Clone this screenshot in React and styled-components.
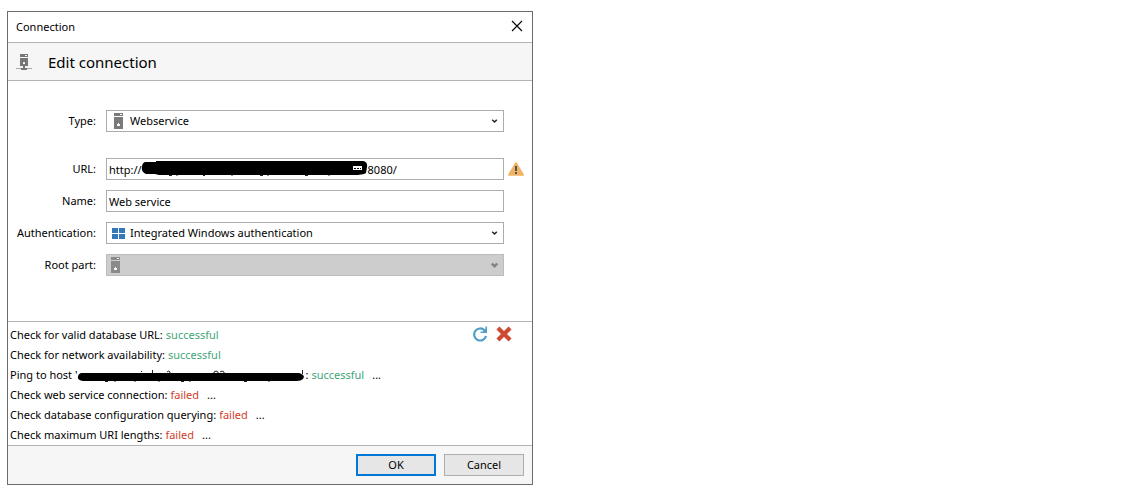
import React from "react"
import styled, { createGlobalStyle } from "styled-components"

const GlobalStyle = createGlobalStyle`
  body {
    margin: 0;
    background: #fff;
  }

  * {
    box-sizing: border-box;
  }

  body,
  button,
  input,
  select {
    font-family: "Noto Sans", "Open Sans", sans-serif;
    font-size: 11px;
    line-height: 20px;
    color: #000;
  }
`

const Dialog = styled.main`
  max-width: 526px;
  margin: 11px 7px;
  border: 1px solid #6b6b6b;
  background: #fff;
`

const TitleBar = styled.header`
  display: flex;
  align-items: center;
  justify-content: space-between;
  height: 31px;
  padding: 0 7px 0 8px;
  border-bottom: 1px solid #b3b3b3;
`

const Heading = styled.div`
  display: flex;
  align-items: center;
  gap: 16px;
  height: 38px;
  padding: 0 8px;
  background: #f6f6f6;
  border-bottom: 1px solid #b3b3b3;
`

const HeadingText = styled.h1`
  margin: 0;
  font-size: 15px;
  font-weight: normal;
`

const IconButton = styled.button`
  display: flex;
  padding: 0;
  border: none;
  background: none;
`

const Form = styled.form`
  display: flex;
  flex-direction: column;
  gap: 10px;
  padding: 29px 0 45px;
`

const Row = styled.div`
  display: grid;
  grid-template-columns: 88px 1fr 28px;
  align-items: center;
  height: 22px;
  ${props => props.$spaced && "margin-bottom: 16px;"}
`

const Label = styled.label`
  text-align: right;
  white-space: nowrap;
`

const Field = styled.div`
  position: relative;
  height: 22px;
  margin-left: 10px;
`

const TextInput = styled.input`
  display: block;
  width: 100%;
  height: 22px;
  padding: 0 2px;
  border: 1px solid #abadb3;
  border-radius: 0;
  background: #fff;
  outline: none;
`

const Select = styled.select`
  display: block;
  width: 100%;
  height: 22px;
  padding: 0 20px 0 23px;
  appearance: none;
  border: 1px solid ${props => (props.disabled ? "#bcbcbc" : "#acacac")};
  border-radius: 0;
  background: ${props => (props.disabled ? "#cdcdcd" : "#fff")};
  opacity: 1;
  outline: none;
`

const FieldIcon = styled.span`
  position: absolute;
  top: 3px;
  left: ${props => (props.$inset ? "5px" : "2px")};
  display: flex;
  pointer-events: none;
`

const Arrow = styled.svg`
  position: absolute;
  top: 8px;
  right: 6px;
  pointer-events: none;
`

const UrlMask = styled.svg`
  position: absolute;
  top: 1px;
  left: 35px;
  pointer-events: none;
`

const Warning = styled.span`
  display: flex;
  padding-left: 4px;
`

const Log = styled.section`
  display: flex;
  align-items: flex-start;
  justify-content: space-between;
  padding: 3px 20px 0 2px;
  border-top: 1px solid #b3b3b3;
  border-bottom: 1px solid #b3b3b3;
`

const LogList = styled.ul`
  margin: 0;
  padding: 0;
  list-style: none;
`

const LogItem = styled.li`
  display: flex;
  align-items: center;
  height: 20px;
  white-space: nowrap;
`

const Status = styled.span`
  margin-left: 3px;
  color: ${props => (props.$failed ? "#d0402c" : "#3fa578")};
`

const Details = styled.a`
  margin-left: 8px;
  color: #000;
  text-decoration: none;
`

const LogTools = styled.div`
  display: flex;
  gap: 8px;
  padding-top: 1px;
`

const Footer = styled.footer`
  display: flex;
  justify-content: flex-end;
  gap: 8px;
  padding: 8px;
  background: #f6f6f6;
`

const Button = styled.button`
  width: 80px;
  height: 22px;
  padding: 0;
  line-height: 18px;
  border: ${props => (props.$primary ? "2px solid #0078d7" : "1px solid #adadad")};
  background: #e6e6e6;
`

const ServerIcon = ({ color = "#7a7a7a", back = "#fff" }) => (
  <svg width="16" height="16" shapeRendering="crispEdges" aria-hidden="true">
    <path d="M3 0h9v3H3zM3 4h9v12H3z" fill={color} />
    <path d="M9 1h2v1H9z" fill={back} />
    <path d="M6 11h1v-1h1v1h1v2H6z" fill={back} />
  </svg>
)

const NetworkServerIcon = () => (
  <svg width="16" height="16" shapeRendering="crispEdges" aria-hidden="true">
    <path d="M4 0h8v3H4zM4 4h8v8H4zM7 12h2v2H7zM5 14h6v2H5z" fill="#777" />
    <path d="M9 1h2v1H9zM7 8h2v2H7z" fill="#f6f6f6" />
    <path d="M0 14h5v1H0zM11 14h5v1h-5z" fill="#a4adab" />
  </svg>
)

const WindowsIcon = () => (
  <svg width="16" height="16" shapeRendering="crispEdges" aria-hidden="true">
    <path d="M1 3h6v5H1zM8 3h6v5H8zM1 9h6v5H1zM8 9h6v5H8z" fill="#3379b9" />
  </svg>
)

const WarningIcon = () => (
  <svg width="16" height="16" role="img" aria-label="Warning">
    <path
      d="M8 1.8 15.2 14H.8z"
      fill="#f0b364"
      stroke="#f0b364"
      strokeWidth="1.6"
      strokeLinejoin="round"
    />
    <path d="M7 5h2v5H7zM7 11h2v2H7z" fill="#555" />
  </svg>
)

const DropArrow = ({ disabled }) => (
  <Arrow width="7" height="7" aria-hidden="true">
    <path
      d={disabled ? "M.8 1.500 3.500 4.200 6.200 1.500" : "M1.2 1.700 3.500 4 5.800 1.700"}
      fill="none"
      stroke={disabled ? "#838383" : "#222"}
      strokeWidth={disabled ? "2.4" : "1.5"}
    />
  </Arrow>
)

const RefreshIcon = () => (
  <svg width="16" height="16" aria-hidden="true">
    <path
      d="M12.6 4.4A6 6 0 1 0 14 10"
      fill="none"
      stroke="#4f9fc4"
      strokeWidth="2.2"
    />
    <path d="M15 .6V7H8.6V5.4h2.6L13.4 3V.6z" fill="#4f9fc4" />
  </svg>
)

const DeleteIcon = () => (
  <svg width="16" height="16" aria-hidden="true">
    <path
      d="M3.4 3.4l9.2 9.2M12.6 3.4l-9.2 9.2"
      fill="none"
      stroke="#ce4a31"
      strokeWidth="4.2"
      strokeLinecap="square"
    />
  </svg>
)

const CloseIcon = () => (
  <svg width="16" height="16" aria-hidden="true">
    <path d="M3 2l10 10M13 2L3 12" stroke="#000" strokeWidth="1.1" />
  </svg>
)

// host names are blacked out by hand, a few descenders stick out
const HostMask = () => (
  <UrlMask width="228" height="20" aria-hidden="true">
    <path
      d="M4 3H15V2H160L222 2Q227 3 226 8L225 14Q222 16 212 16H18L14 15H5Q0 13 1 8Q1 4 4 3z"
      fill="#000"
    />
    <path
      d="M28 16.500h3M36 16v1M62 16.500h2M91 16v1M119 16.500h3M127 16v1M164 16.500h3M188 16v1"
      stroke="#222"
    />
    <path d="M212 7h9v4h-9z" fill="#fff" />
    <path d="M213 9.500h2M216 9.500h2M219 9.500h1" stroke="#000" />
  </UrlMask>
)

const PingMask = () => (
  <svg width="228" height="20" aria-hidden="true">
    <path
      d="M4 8H222Q229 10 226 14Q224 16 220 16H6Q0 15 1 12Q1 9 4 8z"
      fill="#000"
    />
    <path
      d="M64 6.500h1M75.500 5v3M90 7q2-2 3 0v1M137 8v-1q2-2 4 0v1M143 7q2-2 4 0v1M225.500 5v4M28 16.500h3M38 16v1M58 16v1M82 16v1M104 16.500h3M113 16v1M167 16.500h3M192 16v1"
      fill="none"
      stroke="#222"
    />
  </svg>
)

const checks = [
  { text: "Check for valid database URL:" },
  { text: "Check for network availability:" },
  { text: "Ping to host '", masked: true, details: true },
  { text: "Check web service connection:", failed: true, details: true },
  { text: "Check database configuration querying:", failed: true, details: true },
  { text: "Check maximum URI lengths:", failed: true, details: true },
]

const url = `http://${"\u00a0".repeat(79)}8080/`

const App = () => (
  <>
    <GlobalStyle />
    <Dialog>
      <TitleBar>
        <span>Connection</span>
        <IconButton type="button" aria-label="Close">
          <CloseIcon />
        </IconButton>
      </TitleBar>
      <Heading>
        <NetworkServerIcon />
        <HeadingText>Edit connection</HeadingText>
      </Heading>

      <Form>
        <Row $spaced>
          <Label htmlFor="type">Type:</Label>
          <Field>
            <Select id="type">
              <option>Webservice</option>
            </Select>
            <FieldIcon $inset>
              <ServerIcon />
            </FieldIcon>
            <DropArrow />
          </Field>
        </Row>
        <Row>
          <Label htmlFor="url">URL:</Label>
          <Field>
            <TextInput id="url" defaultValue={url} />
            <HostMask />
          </Field>
          <Warning>
            <WarningIcon />
          </Warning>
        </Row>
        <Row>
          <Label htmlFor="name">Name:</Label>
          <Field>
            <TextInput id="name" defaultValue="Web service" />
          </Field>
        </Row>
        <Row>
          <Label htmlFor="auth">Authentication:</Label>
          <Field>
            <Select id="auth">
              <option>Integrated Windows authentication</option>
            </Select>
            <FieldIcon $inset>
              <WindowsIcon />
            </FieldIcon>
            <DropArrow />
          </Field>
        </Row>
        <Row>
          <Label htmlFor="root-part">Root part:</Label>
          <Field>
            <Select id="root-part" disabled />
            <FieldIcon>
              <ServerIcon color="#8a8a8a" back="#f4f4f4" />
            </FieldIcon>
            <DropArrow disabled />
          </Field>
        </Row>
      </Form>

      <Log>
        <LogList>
          {checks.map(check => (
            <LogItem key={check.text}>
              <span>{check.text}</span>
              {check.masked && (
                <>
                  <PingMask />
                  <span>:</span>
                </>
              )}
              <Status $failed={check.failed}>
                {check.failed ? "failed" : "successful"}
              </Status>
              {check.details && <Details href="#details">...</Details>}
            </LogItem>
          ))}
        </LogList>
        <LogTools>
          <IconButton type="button" aria-label="Repeat checks">
            <RefreshIcon />
          </IconButton>
          <IconButton type="button" aria-label="Clear">
            <DeleteIcon />
          </IconButton>
        </LogTools>
      </Log>

      <Footer>
        <Button type="button" $primary>
          OK
        </Button>
        <Button type="button">Cancel</Button>
      </Footer>
    </Dialog>
  </>
)

export default App
